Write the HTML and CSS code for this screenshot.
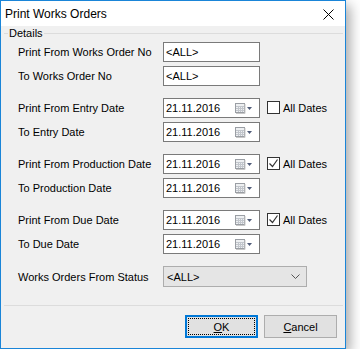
FILE: index.html
```html
<!DOCTYPE html>
<html lang="en">
<head>
    <meta charset="UTF-8">
    <title>Print Works Orders</title>
    <link rel="stylesheet" href="styles.css">
</head>
<body>
    <div class="window">
        <div class="titlebar">
            <span class="title">Print Works Orders</span>
            <svg class="close" width="11" height="11" viewBox="0 0 11 11">
                <path d="M0.5 0.5 L10.5 10.5 M10.5 0.5 L0.5 10.5" stroke="#000" stroke-width="1"/>
            </svg>
        </div>

        <div class="content">
            <div class="group-head">
                <span class="rule-start"></span>
                <span class="legend">Details</span>
                <span class="rule"></span>
            </div>

            <div class="row">
                <label class="label">Print From Works Order No</label>
                <div class="textbox">&lt;ALL&gt;</div>
            </div>
            <div class="row gap-after">
                <label class="label">To Works Order No</label>
                <div class="textbox">&lt;ALL&gt;</div>
            </div>

            <div class="row">
                <label class="label">Print From Entry Date</label>
                <div class="datebox">
                    <span>21.11.2016</span>
                    <svg class="cal" width="18" height="11" viewBox="0 0 18 11">
                        <rect x="0.5" y="0.5" width="9" height="9" fill="#eef0f2" stroke="#9a9ea4"/>
                        <path d="M1 3.5 H9 M1 5.5 H9 M1 7.5 H9 M3.5 3 V9 M5.5 3 V9 M7.5 3 V9" stroke="#c2c6cc" stroke-width="1"/>
                        <path d="M10 1 V10.5 H1" stroke="#c8c8c8" fill="none"/>
                        <path d="M12 4 H17 L14.5 7 Z" fill="#4f5b78"/>
                    </svg>
                </div>
                <span class="check"></span>
                <span class="check-label">All Dates</span>
            </div>
            <div class="row gap-after">
                <label class="label">To Entry Date</label>
                <div class="datebox">
                    <span>21.11.2016</span>
                    <svg class="cal" width="18" height="11" viewBox="0 0 18 11">
                        <rect x="0.5" y="0.5" width="9" height="9" fill="#eef0f2" stroke="#9a9ea4"/>
                        <path d="M1 3.5 H9 M1 5.5 H9 M1 7.5 H9 M3.5 3 V9 M5.5 3 V9 M7.5 3 V9" stroke="#c2c6cc" stroke-width="1"/>
                        <path d="M10 1 V10.5 H1" stroke="#c8c8c8" fill="none"/>
                        <path d="M12 4 H17 L14.5 7 Z" fill="#4f5b78"/>
                    </svg>
                </div>
            </div>

            <div class="row">
                <label class="label">Print From Production Date</label>
                <div class="datebox">
                    <span>21.11.2016</span>
                    <svg class="cal" width="18" height="11" viewBox="0 0 18 11">
                        <rect x="0.5" y="0.5" width="9" height="9" fill="#eef0f2" stroke="#9a9ea4"/>
                        <path d="M1 3.5 H9 M1 5.5 H9 M1 7.5 H9 M3.5 3 V9 M5.5 3 V9 M7.5 3 V9" stroke="#c2c6cc" stroke-width="1"/>
                        <path d="M10 1 V10.5 H1" stroke="#c8c8c8" fill="none"/>
                        <path d="M12 4 H17 L14.5 7 Z" fill="#4f5b78"/>
                    </svg>
                </div>
                <span class="check">
                    <svg width="11" height="11" viewBox="0 0 11 11">
                        <path d="M1.5 5.5 L4.5 8.5 L9.5 1.5" stroke="#333" stroke-width="1.2" fill="none"/>
                    </svg>
                </span>
                <span class="check-label">All Dates</span>
            </div>
            <div class="row gap-after">
                <label class="label">To Production Date</label>
                <div class="datebox">
                    <span>21.11.2016</span>
                    <svg class="cal" width="18" height="11" viewBox="0 0 18 11">
                        <rect x="0.5" y="0.5" width="9" height="9" fill="#eef0f2" stroke="#9a9ea4"/>
                        <path d="M1 3.5 H9 M1 5.5 H9 M1 7.5 H9 M3.5 3 V9 M5.5 3 V9 M7.5 3 V9" stroke="#c2c6cc" stroke-width="1"/>
                        <path d="M10 1 V10.5 H1" stroke="#c8c8c8" fill="none"/>
                        <path d="M12 4 H17 L14.5 7 Z" fill="#4f5b78"/>
                    </svg>
                </div>
            </div>

            <div class="row">
                <label class="label">Print From Due Date</label>
                <div class="datebox">
                    <span>21.11.2016</span>
                    <svg class="cal" width="18" height="11" viewBox="0 0 18 11">
                        <rect x="0.5" y="0.5" width="9" height="9" fill="#eef0f2" stroke="#9a9ea4"/>
                        <path d="M1 3.5 H9 M1 5.5 H9 M1 7.5 H9 M3.5 3 V9 M5.5 3 V9 M7.5 3 V9" stroke="#c2c6cc" stroke-width="1"/>
                        <path d="M10 1 V10.5 H1" stroke="#c8c8c8" fill="none"/>
                        <path d="M12 4 H17 L14.5 7 Z" fill="#4f5b78"/>
                    </svg>
                </div>
                <span class="check">
                    <svg width="11" height="11" viewBox="0 0 11 11">
                        <path d="M1.5 5.5 L4.5 8.5 L9.5 1.5" stroke="#333" stroke-width="1.2" fill="none"/>
                    </svg>
                </span>
                <span class="check-label">All Dates</span>
            </div>
            <div class="row gap-after">
                <label class="label">To Due Date</label>
                <div class="datebox">
                    <span>21.11.2016</span>
                    <svg class="cal" width="18" height="11" viewBox="0 0 18 11">
                        <rect x="0.5" y="0.5" width="9" height="9" fill="#eef0f2" stroke="#9a9ea4"/>
                        <path d="M1 3.5 H9 M1 5.5 H9 M1 7.5 H9 M3.5 3 V9 M5.5 3 V9 M7.5 3 V9" stroke="#c2c6cc" stroke-width="1"/>
                        <path d="M10 1 V10.5 H1" stroke="#c8c8c8" fill="none"/>
                        <path d="M12 4 H17 L14.5 7 Z" fill="#4f5b78"/>
                    </svg>
                </div>
            </div>

            <div class="row combo-row">
                <label class="label">Works Orders From Status</label>
                <div class="combo">
                    <span>&lt;ALL&gt;</span>
                    <svg width="9" height="5" viewBox="0 0 9 5">
                        <path d="M0.5 0.5 L4.5 4.5 L8.5 0.5" stroke="#555" fill="none"/>
                    </svg>
                </div>
            </div>

            <div class="separator"></div>

            <div class="buttons">
                <button type="button" class="btn btn-default"><span class="focus"><u>O</u>K</span></button>
                <button type="button" class="btn"><u>C</u>ancel</button>
            </div>
        </div>
    </div>
</body>
</html>
```

FILE: styles.css
```css
body {
    margin: 0;
    background-color: #fff;
    font-family: "Liberation Sans", Arial, sans-serif;
    font-size: 11px;
    color: #000;
}

.window {
    width: 344px;
    height: 347px;
    border: 1px solid #1a85d8;
    display: flex;
    flex-direction: column;
    box-shadow: 4px 5px 12px rgba(0, 0, 0, 0.35);
}

.titlebar {
    height: 25px;
    background-color: #fff;
    display: flex;
    align-items: center;
    justify-content: space-between;
    padding: 0 11px 0 4px;
}

.title {
    font-size: 12px;
}

.close {
    margin-top: 1px;
}

.content {
    flex: 1;
    background-color: #f0f0f0;
    padding: 0 2px 0 3px;
    display: flex;
    flex-direction: column;
}

.group-head {
    height: 14px;
    display: flex;
    align-items: center;
}

.rule-start {
    width: 4px;
    border-top: 1px solid #dcdcdc;
}

.legend {
    padding: 0 1px;
}

.rule {
    flex: 1;
    border-top: 1px solid #dcdcdc;
}

.row {
    display: flex;
    align-items: center;
    height: 20px;
    margin-bottom: 4px;
    padding-left: 14px;
}

.row:first-of-type {
    margin-top: 2px;
}

.group-head + .row {
    margin-top: 2px;
}

.row.gap-after {
    margin-bottom: 12px;
}

.label {
    width: 145px;
}

.textbox, .datebox {
    box-sizing: border-box;
    width: 97px;
    height: 20px;
    border: 1px solid #7a7a7a;
    background-color: #fff;
    display: flex;
    align-items: center;
    padding-left: 2px;
}

.datebox {
    justify-content: space-between;
    padding-right: 6px;
}

.cal {
    margin-top: 1px;
}

.check {
    box-sizing: border-box;
    width: 13px;
    height: 13px;
    border: 1px solid #333;
    background-color: #fff;
    margin-left: 7px;
    margin-top: -1px;
    display: flex;
}

.check-label {
    margin-left: 3px;
}

.combo-row {
    height: 21px;
}

.combo {
    box-sizing: border-box;
    width: 144px;
    height: 21px;
    border: 1px solid #adadad;
    background-color: #e5e5e5;
    display: flex;
    align-items: center;
    justify-content: space-between;
    padding: 0 6px 0 3px;
}

.separator {
    margin-top: 14px;
    border-top: 1px solid #dcdcdc;
}

.buttons {
    display: flex;
    justify-content: flex-end;
    gap: 6px;
    margin-top: 9px;
    padding-right: 6px;
}

.btn {
    box-sizing: border-box;
    width: 73px;
    height: 23px;
    border: 1px solid #adadad;
    background-color: #e1e1e1;
    font-family: "Liberation Sans", Arial, sans-serif;
    font-size: 11px;
    color: #000;
    padding: 0;
    display: flex;
    align-items: center;
    justify-content: center;
}

.btn-default {
    border: 2px solid #0078d7;
    padding: 1px;
}

.btn-default .focus {
    flex: 1;
    align-self: stretch;
    border: 1px dotted #000;
    display: flex;
    align-items: center;
    justify-content: center;
}
```
